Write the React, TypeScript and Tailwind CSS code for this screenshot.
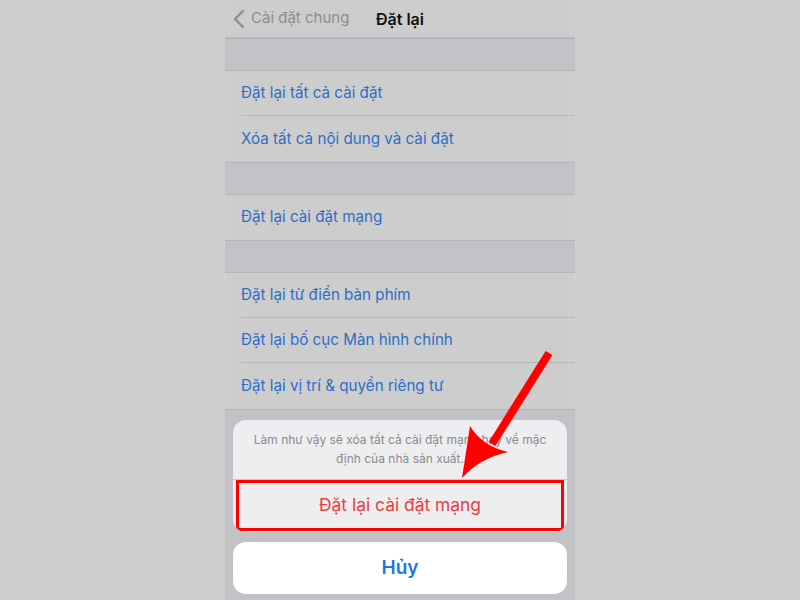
import React from 'react';

const groups: string[][] = [
  ['Đặt lại tất cả cài đặt', 'Xóa tất cả nội dung và cài đặt'],
  ['Đặt lại cài đặt mạng'],
  ['Đặt lại từ điển bàn phím', 'Đặt lại bố cục Màn hình chính', 'Đặt lại vị trí & quyền riêng tư'],
];

function Gap() {
  return <div className="h-[33px] bg-[#c2c2c6] border-y border-[#b6b6ba]" />;
}

function Row({ label, last }: { label: string; last: boolean }) {
  return (
    <div className="h-[45.3px] pl-4 bg-[#cdcdcd]">
      <div className={`h-full flex items-center text-[15.2px] text-[#2d6ecb] ${last ? '' : 'border-b border-[#b8b8bb]'}`}>
        {label}
      </div>
    </div>
  );
}

function Arrow() {
  return (
    <svg className="absolute left-0 top-0 pointer-events-none" width="800" height="600" viewBox="0 0 800 600">
      <line x1="549" y1="353" x2="492" y2="444" stroke="#ff0000" strokeWidth="8" />
      <path d="M462 478 L470 426 Q482 446 508 452 Q480 458 462 478 Z" fill="#ff0000" />
    </svg>
  );
}

export default function App() {
  return (
    <div className="relative w-full h-[600px] bg-[#cfcfcf] flex justify-center overflow-hidden" style={{ fontFamily: 'Inter, "Noto Sans", sans-serif' }}>
      <div className="w-[350px] h-full flex flex-col bg-[#cdcdcd]">
        <div className="h-[38px] grid grid-cols-[1fr_auto_1fr] items-center border-b border-[#b6b6ba] bg-[#cdcdcd]">
          <div className="flex items-center gap-[6px] pl-[8px] text-[#8c8c8c] text-[15px]">
            <svg width="12" height="20" viewBox="0 0 12 20">
              <path d="M10 2 L2 10 L10 18" fill="none" stroke="#8c8c8c" strokeWidth="2.4" strokeLinecap="round" strokeLinejoin="round" />
            </svg>
            <span>Cài đặt chung</span>
          </div>
          <div className="text-[16px] font-semibold text-[#111]">Đặt lại</div>
          <div />
        </div>

        {groups.map((g, gi) => (
          <React.Fragment key={gi}>
            <Gap />
            {g.map((label, i) => (
              <Row key={label} label={label} last={i === g.length - 1} />
            ))}
          </React.Fragment>
        ))}

        <div className="flex-1 bg-[#c2c2c6] border-t border-[#b6b6ba] px-2 pt-[10px] flex flex-col gap-[10px]">
          <div className="rounded-[13px] bg-[#eeeef0] overflow-hidden">
            <div className="h-[60px] px-3 flex items-center justify-center text-center text-[12px] leading-[19px] text-[#8a8a8e] border-b border-[#c8c8cc]">
              Làm như vậy sẽ xóa tất cả cài đặt mạng hay về mặc định của nhà sản xuất.
            </div>
            <div className="h-[52px] px-[3px] pb-[1px] flex">
              <div className="flex-1 border-[3px] border-[#ff0000] flex items-center justify-center text-[17.4px] text-[#e8403e]">
                Đặt lại cài đặt mạng
              </div>
            </div>
          </div>
          <div className="h-[52px] rounded-[13px] bg-white flex items-center justify-center text-[19px] font-semibold text-[#1f74e6]">
            Hủy
          </div>
        </div>
      </div>
      <Arrow />
    </div>
  );
}
